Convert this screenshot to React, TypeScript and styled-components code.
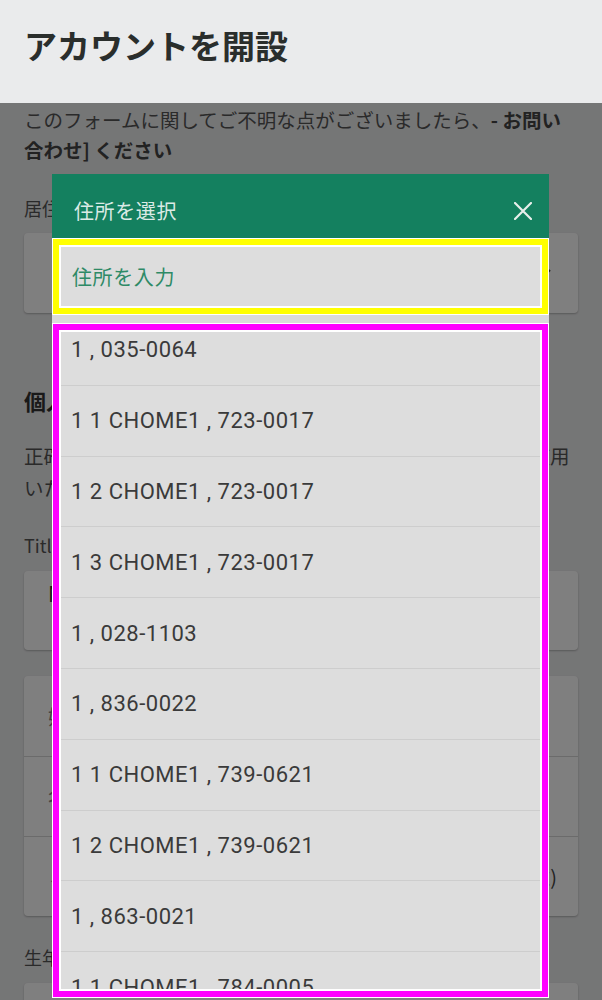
import React, { useEffect, useRef } from "react";
import styled, { createGlobalStyle } from "styled-components";

const GlobalStyle = createGlobalStyle`
  html, body {
    margin: 0;
    padding: 0;
  }
  body {
    background: #ebeced;
    font-family: "Noto Sans CJK JP", "Noto Sans", sans-serif;
    overflow: hidden;
  }
  * {
    box-sizing: border-box;
  }
`;

const Page = styled.div`
  width: 602px;
  height: 1000px;
  display: flex;
  flex-direction: column;
  overflow: hidden;
  background: #ebeced;
`;

const TopBar = styled.header`
  height: 103px;
  flex-shrink: 0;
  display: flex;
  align-items: center;
  padding: 0 24px 13px;
  background: #eaebec;
`;

const PageTitle = styled.h1`
  margin: 0;
  font-size: 33px;
  font-weight: 700;
  color: #2a2e2c;
`;

const Content = styled.main`
  position: relative;
  flex: 1;
  padding: 2px 24px 0;
  display: flex;
  flex-direction: column;
`;

const Intro = styled.p`
  margin: 0;
  font-size: 19.5px;
  line-height: 30px;
  color: #555;

  strong {
    font-weight: 700;
    color: #444;
  }
`;

const FieldLabel = styled.label<{ $top: number }>`
  display: block;
  margin-top: ${(p) => p.$top}px;
  font-size: 18px;
  line-height: 26px;
  color: #555;
`;

const Card = styled.div<{ $top: number; $height?: number }>`
  margin-top: ${(p) => p.$top}px;
  height: ${(p) => p.$height ?? 80}px;
  flex-shrink: 0;
  display: flex;
  align-items: center;
  justify-content: space-between;
  padding: 0 24px;
  background: #fff;
  border-radius: 4px;
  box-shadow: 0 1px 2px rgba(0, 0, 0, 0.25);
`;

const SelectCard = styled(Card)`
  align-items: flex-start;
  padding-top: 10px;
`;

const SelectValue = styled.span`
  font-size: 21px;
  line-height: 24px;
  color: #333;
`;

const SectionTitle = styled.h2`
  margin: 72px 0 0;
  font-size: 22px;
  line-height: 30px;
  font-weight: 700;
  color: #333;
`;

const Para = styled.p`
  margin: 25px 0 0;
  font-size: 19.5px;
  line-height: 32px;
  color: #555;
`;

const Group = styled.div`
  margin-top: 26px;
  flex-shrink: 0;
  display: flex;
  flex-direction: column;
  background: #fff;
  border-radius: 4px;
  box-shadow: 0 1px 2px rgba(0, 0, 0, 0.25);
`;

const GroupRow = styled.div`
  height: 80px;
  display: flex;
  align-items: center;
  justify-content: space-between;
  padding: 0 21px 0 24px;
  & + & {
    border-top: 1px solid #d6d6d6;
  }
`;

const Placeholder = styled.span`
  font-size: 20px;
  color: #888;
`;

const Hint = styled.span`
  font-size: 20px;
  color: #444;
`;

const Overlay = styled.div`
  position: absolute;
  inset: 0;
  background: rgba(0, 0, 0, 0.5);
`;

const Modal = styled.section`
  position: absolute;
  top: 71px;
  left: 52px;
  width: 497px;
  display: flex;
  flex-direction: column;
  background: #dadada;
`;

const ModalHeader = styled.div`
  height: 64px;
  display: flex;
  align-items: center;
  justify-content: space-between;
  padding: 9px 17px 0 22px;
  background: #14805f;
`;

const ModalTitle = styled.h3`
  margin: 0;
  font-size: 20px;
  font-weight: 400;
  letter-spacing: 0.6px;
  color: rgba(255, 255, 255, 0.86);
`;

const CloseButton = styled.button`
  width: 18px;
  height: 18px;
  padding: 0;
  border: 0;
  background: none;
  display: flex;
  cursor: pointer;
`;

const ModalBody = styled.div`
  display: flex;
  flex-direction: column;
  gap: 8px;
`;

const highlight = (color: string) => `
  box-shadow: inset 0 0 0 1px #fff, inset 0 0 0 7px ${color}, inset 0 0 0 9px #fff;
`;

const SearchBox = styled.div`
  height: 77px;
  padding: 9px;
  background: #dddddd;
  ${highlight("#ffff00")}
`;

const SearchInput = styled.input`
  width: 100%;
  height: 100%;
  border: 0;
  outline: none;
  background: transparent;
  padding: 0 0 0 11px;
  font-family: "Noto Sans CJK JP", sans-serif;
  font-size: 20px;
  letter-spacing: 0.6px;
  color: #2e8a66;
  &::placeholder {
    color: #2e8a66;
  }
`;

const ResultBox = styled.div`
  height: 675px;
  padding: 9px;
  background: #dddddd;
  ${highlight("#ff00ff")}
`;

const ResultList = styled.ul`
  list-style: none;
  margin: 0;
  padding: 0;
  height: 100%;
  overflow-y: auto;
  scrollbar-width: none;
  &::-webkit-scrollbar {
    display: none;
  }
`;

const ResultItem = styled.li`
  height: 70.8px;
  display: flex;
  align-items: center;
  padding-left: 10px;
  border-bottom: 1px solid #cdcdcd;
  font-family: Roboto, "Liberation Sans", sans-serif;
  font-size: 22px;
  letter-spacing: 0.5px;
  color: #3a3a3a;
`;

const addresses = [
  "1 , 035-0064",
  "1 1 CHOME1 , 723-0017",
  "1 2 CHOME1 , 723-0017",
  "1 3 CHOME1 , 723-0017",
  "1 , 028-1103",
  "1 , 836-0022",
  "1 1 CHOME1 , 739-0621",
  "1 2 CHOME1 , 739-0621",
  "1 , 863-0021",
  "1 1 CHOME1 , 784-0005",
  "1 2 CHOME1 , 784-0005",
];

const CloseIcon = () => (
  <svg width="18" height="18" viewBox="0 0 18 18">
    <path d="M1 1 L17 17 M17 1 L1 17" stroke="#e8efeb" strokeWidth="2.2" strokeLinecap="round" />
  </svg>
);

const Chevron = () => (
  <svg width="12" height="8" viewBox="0 0 12 8" style={{ marginRight: 3 }}>
    <path d="M1 1 L6 6 L11 1" stroke="#444" strokeWidth="2" fill="none" />
  </svg>
);

export default function App() {
  const listRef = useRef<HTMLUListElement>(null);

  useEffect(() => {
    if (listRef.current) listRef.current.scrollTop = 17;
  }, []);

  return (
    <>
      <GlobalStyle />
      <Page>
        <TopBar>
          <PageTitle>アカウントを開設</PageTitle>
        </TopBar>
        <Content>
          <Intro>
            このフォームに関してご不明な点がございましたら、<strong>- お問い合わせ]</strong>{" "}
            <strong>ください</strong>
          </Intro>
          <FieldLabel $top={30}>居住国</FieldLabel>
          <Card $top={12}>
            <span />
            <Chevron />
          </Card>

          <SectionTitle>個人情報</SectionTitle>
          <Para>正確にご入力ください。入力いただいた情報は本人確認に使用いたします。</Para>

          <FieldLabel $top={28}>Title</FieldLabel>
          <SelectCard $top={13} $height={79}>
            <SelectValue>Mr.</SelectValue>
          </SelectCard>

          <Group>
            <GroupRow>
              <Placeholder>姓（ローマ字）</Placeholder>
            </GroupRow>
            <GroupRow>
              <Placeholder>名（ローマ字）</Placeholder>
            </GroupRow>
            <GroupRow>
              <Placeholder>ミドルネーム</Placeholder>
              <Hint>(任意)</Hint>
            </GroupRow>
          </Group>

          <FieldLabel $top={28}>生年月日</FieldLabel>
          <Card $top={13} />

          <Overlay />

          <Modal>
            <ModalHeader>
              <ModalTitle>住所を選択</ModalTitle>
              <CloseButton aria-label="閉じる">
                <CloseIcon />
              </CloseButton>
            </ModalHeader>
            <ModalBody>
              <SearchBox>
                <SearchInput placeholder="住所を入力" />
              </SearchBox>
              <ResultBox>
                <ResultList ref={listRef}>
                  {addresses.map((a, i) => (
                    <ResultItem key={i}>{a}</ResultItem>
                  ))}
                </ResultList>
              </ResultBox>
            </ModalBody>
          </Modal>
        </Content>
      </Page>
    </>
  );
}
